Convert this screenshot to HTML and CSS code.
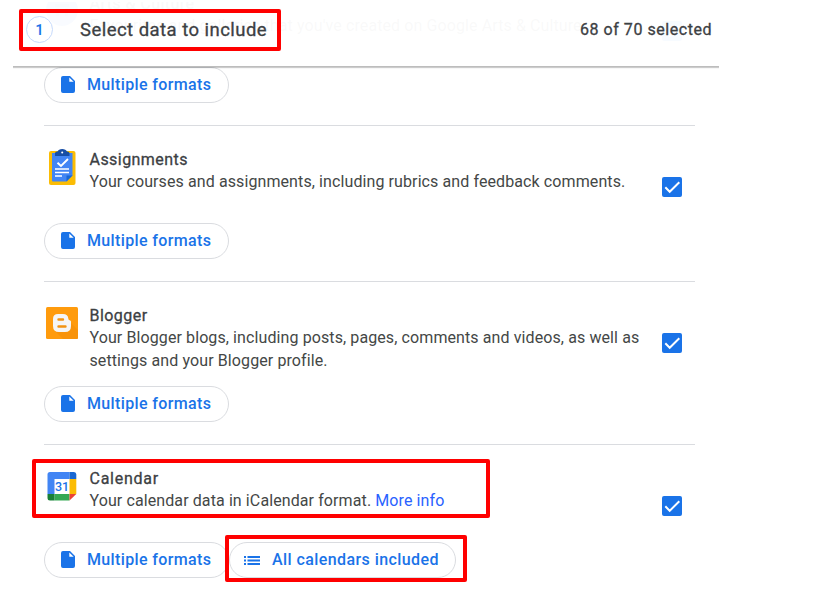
FILE: index.html
```html
<!DOCTYPE html>
<html lang="en">
<head>
    <meta charset="UTF-8">
    <meta name="viewport" content="width=device-width, initial-scale=1.0">
    <title>Select data to include</title>
    <link rel="stylesheet" href="styles.css">
</head>
<body>
    <svg class="defs">
        <symbol id="file" viewBox="0 0 14 17">
            <path fill="#1a73e8" fill-rule="evenodd" d="M2 0H9L14 5V15Q14 17 12 17H2Q0 17 0 15V2Q0 0 2 0ZM8.3 1.4V5.8H12.7Z"/>
        </symbol>
        <symbol id="check" viewBox="0 0 20 20">
            <path fill="none" stroke="#fff" stroke-width="2" d="M3.3 10.3L7.7 14.8L17.3 5.2"/>
        </symbol>
    </svg>

    <div class="panel">
        <div class="header">
            <span class="step">1</span>
            <h1>Select data to include</h1>
            <span class="count">68 of 70 selected</span>
        </div>

        <div class="list">
            <div class="row">
                <div class="info">
                    <svg class="icon" viewBox="0 0 32 40"><circle cx="16" cy="19" r="16" fill="#4285f4"/><path fill="#185abc" d="M9 13H23V16H9ZM10 17H13V25H10ZM19 17H22V25H19Z"/></svg>
                    <div class="text">
                        <h2>Arts &amp; Culture</h2>
                        <p>Favourites and galleries that you've created on Google Arts &amp; Culture</p>
                    </div>
                    <span class="checkbox"><svg><use href="#check"/></svg></span>
                </div>
                <div class="buttons">
                    <button><svg class="file"><use href="#file"/></svg>Multiple formats</button>
                </div>
            </div>

            <div class="row">
                <div class="info">
                    <svg class="icon" viewBox="0 0 32 40">
                        <rect x="3" y="4" width="26.500" height="34" rx="2" fill="#fbbc04"/>
                        <path fill="#4285f4" d="M6 6H26.500V28.500L20.500 34.500H7Q6 34.500 6 33.500Z"/>
                        <path fill="#1967d2" d="M20.500 28.500H26.500L20.500 34.500Z"/>
                        <path fill="#174ea6" d="M9 9V6.500Q9 4.500 11 4.500H11.500Q12.500 2 16.200 2T21 4.500H21.500Q23.500 4.500 23.500 6.500V9Z"/>
                        <circle cx="16.200" cy="5.500" r="1" fill="#fff"/>
                        <path fill="none" stroke="#fff" stroke-width="1.900" d="M11.500 15.700L15 19L22 12"/>
                        <path fill="none" stroke="#fff" stroke-width="1.500" d="M9 22H23M9 25.500H23M9 29H16"/>
                    </svg>
                    <div class="text">
                        <h2>Assignments</h2>
                        <p>Your courses and assignments, including rubrics and feedback comments.</p>
                    </div>
                    <span class="checkbox"><svg><use href="#check"/></svg></span>
                </div>
                <div class="buttons">
                    <button><svg class="file"><use href="#file"/></svg>Multiple formats</button>
                </div>
            </div>

            <div class="row">
                <div class="info">
                    <svg class="icon" viewBox="0 0 32 40">
                        <rect y="4" width="32" height="32" rx="1.500" fill="#ff9b0d"/>
                        <path fill="#f8930a" d="M9 28L17 36H30.500Q32 36 32 34.500V27L24.500 19.500L23 28Z"/>
                        <path fill="#f5f5f5" d="M12 11H17Q22 11 22.300 15.500Q22.400 17 23.600 17.200Q25 17.400 25 18.500V23Q25 29 19 29H13Q7 29 7 23V16Q7 11 12 11Z"/>
                        <path stroke="#f29312" stroke-width="2.400" stroke-linecap="round" d="M12.500 16.500H17M12.500 23.500H19.500"/>
                    </svg>
                    <div class="text">
                        <h2>Blogger</h2>
                        <p>Your Blogger blogs, including posts, pages, comments and videos, as well as settings and your Blogger profile.</p>
                    </div>
                    <span class="checkbox"><svg><use href="#check"/></svg></span>
                </div>
                <div class="buttons">
                    <button><svg class="file"><use href="#file"/></svg>Multiple formats</button>
                </div>
            </div>

            <div class="row">
                <div class="info">
                    <svg class="icon" viewBox="0 0 32 40">
                        <path fill="#4285f4" d="M4 6H23.500V13H8.500V28H1.500V8.500Q1.500 6 4 6Z"/>
                        <path fill="#1967d2" d="M23.500 6H28Q30.300 6 30.300 8.500V13H23.500Z"/>
                        <path fill="#fbbc04" d="M23.500 13H30.300V28H23.500Z"/>
                        <path fill="#34a853" d="M8.500 28H23.500V34.500H8.500Z"/>
                        <path fill="#188038" d="M1.500 28H8.500V34.500H4Q1.500 34.500 1.500 32Z"/>
                        <path fill="#ea4335" d="M23.500 28H30.300L23.500 34.500Z"/>
                        <text x="16" y="24.500" class="day">31</text>
                    </svg>
                    <div class="text">
                        <h2 class="calendar">Calendar</h2>
                        <p>Your calendar data in iCalendar format. <a href="#">More info</a></p>
                    </div>
                    <span class="checkbox"><svg><use href="#check"/></svg></span>
                </div>
                <div class="buttons">
                    <button><svg class="file"><use href="#file"/></svg>Multiple formats</button>
                    <button class="all"><svg class="lines" viewBox="0 0 16 10"><path fill="#1a73e8" d="M0 0H2V2H0ZM3.500 0H16V2H3.500ZM0 3.500H2V5.500H0ZM3.500 3.500H16V5.500H3.500ZM0 7H2V9H0ZM3.500 7H16V9H3.500Z"/></svg>All calendars included</button>
                </div>
            </div>
        </div>
    </div>

    <div class="mark mark-title"></div>
    <div class="mark mark-calendar"></div>
    <div class="mark mark-included"></div>
</body>
</html>
```
FILE: styles.css
```css
* {
    box-sizing: border-box;
}

body {
    margin: 0;
    height: 606px;
    overflow: hidden;
    position: relative;
    background-color: #fff;
    color: #3c4043;
    font-family: Roboto, sans-serif;
}

h1, h2, p {
    margin: 0;
}

.defs {
    display: none;
}

.panel {
    position: relative;
    width: 706px;
    height: 604px;
    margin: 2px 0 0 13px;
    overflow: hidden;
}

/* header covers the scrolled list */
.header {
    position: absolute;
    top: 0;
    left: 0;
    z-index: 1;
    display: flex;
    align-items: center;
    width: 706px;
    height: 65px;
    padding: 0 7px 9px 13px;
    background-color: rgba(255, 255, 255, 0.97);
    border-bottom: 1px solid #bdbdbd;
    box-shadow: 0 1px 1px rgba(0, 0, 0, 0.2);
}

.step {
    width: 27px;
    height: 27px;
    border: 1px solid #c6dafc;
    border-radius: 50%;
    color: #1a73e8;
    font-size: 15px;
    font-weight: 500;
    line-height: 26px;
    text-align: center;
}

.header h1 {
    margin-left: 27px;
    font-size: 18.5px;
    font-weight: 400;
    letter-spacing: 0.46px;
    -webkit-text-stroke: 0.3px #3c4043;
}

.count {
    margin-left: auto;
    font-size: 16px;
    font-weight: 400;
    letter-spacing: 0.54px;
    -webkit-text-stroke: 0.3px #3c4043;
}

.list {
    margin: -32px 24px 0 31px;
}

.row {
    padding: 22px 0;
    border-bottom: 1px solid #dadce0;
}

.row:last-child {
    border-bottom: none;
}

.info {
    display: flex;
    min-height: 61px;
    margin-bottom: 14px;
}

.icon {
    width: 32px;
    height: 40px;
    margin: -1px 11.5px 0 2px;
    flex-shrink: 0;
}

.day {
    fill: #1a73e8;
    font-size: 12.5px;
    font-weight: 500;
    text-anchor: middle;
}

.text {
    width: 560px;
}

.text h2 {
    height: 22px;
    font-size: 16px;
    font-weight: 400;
    line-height: 24px;
    letter-spacing: 0.45px;
    -webkit-text-stroke: 0.3px #3c4043;
}

.text h2.calendar {
    letter-spacing: 0.75px;
}

.text p {
    color: #444746;
    font-size: 16px;
    line-height: 23px;
    letter-spacing: 0.1px;
}

.text a {
    color: #2962ff;
    text-decoration: none;
}

.checkbox {
    width: 20px;
    height: 20px;
    margin: 29px 13px 0 auto;
    border-radius: 2px;
    background-color: #1a73e8;
}

.checkbox svg {
    display: block;
    width: 20px;
    height: 20px;
}

.buttons {
    display: flex;
}

button {
    display: flex;
    align-items: center;
    width: 185px;
    height: 36px;
    padding: 0 0 1px 16px;
    border: 1px solid #dadce0;
    border-radius: 18px;
    background-color: #fff;
    color: #1a73e8;
    font-family: Roboto, sans-serif;
    font-size: 16px;
    font-weight: 500;
    letter-spacing: 0.36px;
    white-space: nowrap;
}

button.all {
    width: 227px;
    padding-left: 14px;
    letter-spacing: 0.42px;
}

.file {
    width: 14px;
    height: 17px;
    margin: 0 12px 0 0;
}

.lines {
    width: 16px;
    height: 10px;
    margin: 2px 12px 0 0;
}

.mark {
    position: absolute;
    z-index: 2;
    border: 4px solid #f00;
    border-radius: 2px;
}

.mark-title {
    top: 9px;
    left: 19px;
    width: 262px;
    height: 42px;
}

.mark-calendar {
    top: 459px;
    left: 32px;
    width: 458px;
    height: 59px;
}

.mark-included {
    top: 535px;
    left: 225px;
    width: 242px;
    height: 47px;
}
```
